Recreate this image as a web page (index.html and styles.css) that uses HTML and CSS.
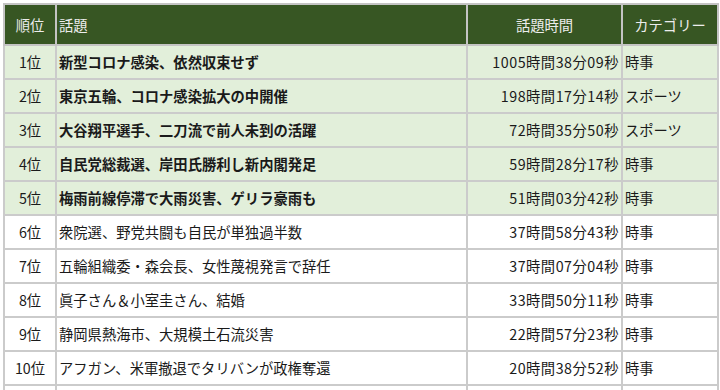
FILE: index.html
```html
<!DOCTYPE html>
<html lang="ja">
<head>
<meta charset="utf-8">
<link rel="stylesheet" href="styles.css">
</head>
<body>
<table class="rank">
  <colgroup>
    <col class="c-rank"><col class="c-topic"><col class="c-time"><col class="c-cat">
  </colgroup>
  <thead>
    <tr><th>順位</th><th class="left">話題</th><th>話題時間</th><th>カテゴリー</th></tr>
  </thead>
  <tbody>
    <tr class="top"><td class="r">1位</td><td class="t">新型コロナ感染、依然収束せず</td><td class="tm">1005時間38分09秒</td><td class="c">時事</td></tr>
    <tr class="top"><td class="r">2位</td><td class="t">東京五輪、コロナ感染拡大の中開催</td><td class="tm">198時間17分14秒</td><td class="c">スポーツ</td></tr>
    <tr class="top"><td class="r">3位</td><td class="t">大谷翔平選手、二刀流で前人未到の活躍</td><td class="tm">72時間35分50秒</td><td class="c">スポーツ</td></tr>
    <tr class="top"><td class="r">4位</td><td class="t">自民党総裁選、岸田氏勝利し新内閣発足</td><td class="tm">59時間28分17秒</td><td class="c">時事</td></tr>
    <tr class="top"><td class="r">5位</td><td class="t">梅雨前線停滞で大雨災害、ゲリラ豪雨も</td><td class="tm">51時間03分42秒</td><td class="c">時事</td></tr>
    <tr><td class="r">6位</td><td class="t">衆院選、野党共闘も自民が単独過半数</td><td class="tm">37時間58分43秒</td><td class="c">時事</td></tr>
    <tr><td class="r">7位</td><td class="t">五輪組織委・森会長、女性蔑視発言で辞任</td><td class="tm">37時間07分04秒</td><td class="c">時事</td></tr>
    <tr><td class="r">8位</td><td class="t">眞子さん＆小室圭さん、結婚</td><td class="tm">33時間50分11秒</td><td class="c">時事</td></tr>
    <tr><td class="r">9位</td><td class="t">静岡県熱海市、大規模土石流災害</td><td class="tm">22時間57分23秒</td><td class="c">時事</td></tr>
    <tr><td class="r">10位</td><td class="t">アフガン、米軍撤退でタリバンが政権奪還</td><td class="tm">20時間38分52秒</td><td class="c">時事</td></tr>
    <tr><td class="r">&nbsp;</td><td class="t">&nbsp;</td><td class="tm">&nbsp;</td><td class="c">&nbsp;</td></tr>
  </tbody>
</table>
</body>
</html>
```
FILE: styles.css
```css
html, body {
  margin: 0;
  padding: 0;
  background: #ffffff;
}
body {
  padding: 3px 0 0 3px;
  font-family: "Noto Sans CJK JP", "Noto Sans", sans-serif;
  font-size: 14.3px;
  color: #1a1a1a;
}
.rank {
  border-collapse: collapse;
  table-layout: fixed;
  width: 714px;
}
.c-rank { width: 52px; }
.c-topic { width: 411px; }
.c-time { width: 155px; }
.c-cat { width: 96px; }
.rank th, .rank td {
  border: 2px solid #cbcbcb;
  padding: 0 2px;
  white-space: nowrap;
  overflow: hidden;
  line-height: 20px;
}
.rank th {
  height: 39px;
  background: #375623;
  color: #ececec;
  font-weight: normal;
  text-align: center;
  border-color: #c4c4c4;
}
.rank th.left {
  text-align: left;
  padding-left: 2px;
}
.rank td {
  height: 32px;
  background: #ffffff;
}
.rank tr.top td {
  background: #e2efda;
}
.rank tr.top td.t {
  font-weight: bold;
}
.r { text-align: center; }
.t { text-align: left; }
.tm {
  text-align: right;
  letter-spacing: 0.5px;
}
.c { text-align: left; }
```
